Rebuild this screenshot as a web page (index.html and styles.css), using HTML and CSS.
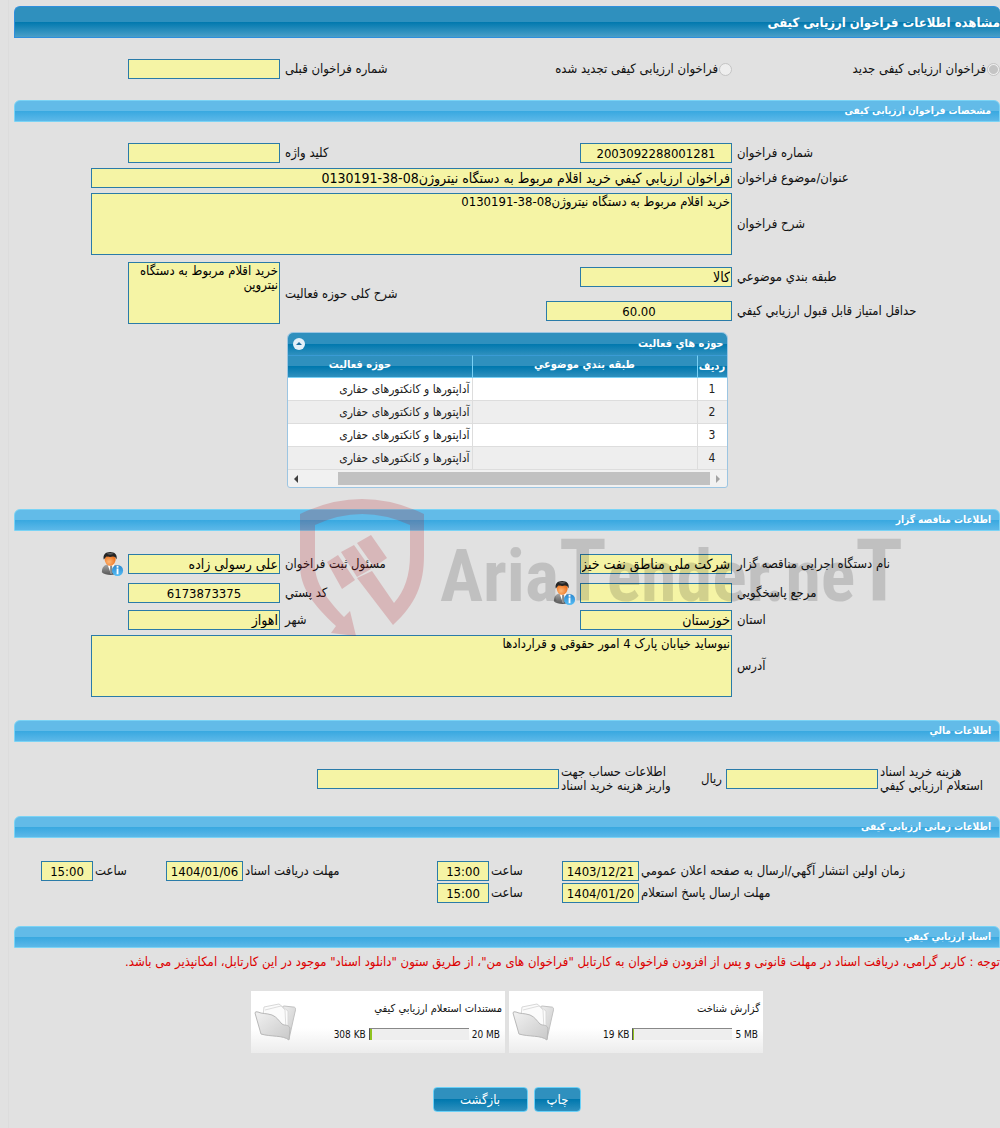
FILE: index.html
```html
<!DOCTYPE html>
<html lang="fa" dir="rtl">
<head>
    <meta charset="UTF-8">
    <meta name="viewport" content="width=device-width, initial-scale=1.0">
    <title>مشاهده اطلاعات فراخوان ارزیابی کیفی</title>
    <link rel="stylesheet" href="styles.css">
</head>
<body>

<!-- Shared icons -->
<svg class="sprite" aria-hidden="true">
    <defs>
        <linearGradient id="suit" x1="0" y1="0" x2="0" y2="1"><stop offset="0" stop-color="#aaa"/><stop offset="1" stop-color="#555"/></linearGradient>
        <radialGradient id="face" cx=".4" cy=".6" r=".6"><stop offset="0" stop-color="#ffb978"/><stop offset="1" stop-color="#ee7420"/></radialGradient>
        <linearGradient id="blue" x1="0" y1="0" x2="0" y2="1"><stop offset="0" stop-color="#2a86cf"/><stop offset="1" stop-color="#55bdf5"/></linearGradient>
        <linearGradient id="paper" x1="0" y1="0" x2="1" y2="1"><stop offset="0" stop-color="#f2f2f2"/><stop offset="1" stop-color="#c8c8c8"/></linearGradient>
    </defs>
    <symbol id="person" viewBox="0 0 24 26">
        <path d="M1 22c0-6 3-8 7-9h5c4 1 7 3 7 9-4 4-15 4-19 0z" fill="url(#suit)"/>
        <path d="M7 13l4 11 4-11z" fill="#fff"/>
        <path d="M10 15h2l1 7-2 2-1-2z" fill="#888"/>
        <path d="M4 7c0 5 3 8 6 8s6-3 6-8l-2-3H6z" fill="url(#face)"/>
        <path d="M3 8c-1-5 2-8 7-8s8 3 7 8c-1-2-2-3-4-3-3 1-6 0-7 0-1 1-2 2-3 3z" fill="#252525"/>
        <path d="M6 2c2-1 6-1 8 0-2 1-6 1-8 0z" fill="#777"/>
        <circle cx="18" cy="20" r="6" fill="url(#blue)"/>
        <path d="M17 15h2v2h-2zm0 3h2v6h-2z" fill="#fff"/>
    </symbol>
    <symbol id="folder" viewBox="0 0 42 38">
        <path d="M26 5l4-2 9 1c3 0 3 2 2 5l-6 27-10-12z" fill="url(#paper)" stroke="#c2c2c2"/>
        <path d="M9 13l1-9 15-3 9 7 0 18-6 2z" fill="#fbfbfb" stroke="#d8d8d8"/>
        <path d="M11 7l16-4 4 4 1 20" fill="none" stroke="#ddd"/>
        <path d="M1 10q0-2 3-1c4 2 8 1 14 3 5 2 7 6 10 9 3 2 6 0 8 4l-1 12c-6-5-18-3-28-6z" fill="url(#paper)" stroke="#b8b8b8"/>
    </symbol>
</svg>

<main class="page">
    <h1 class="title-bar">مشاهده اطلاعات فراخوان ارزیابی کیفی</h1>

    <div class="form-grid kind-row">
        <label class="radio"><input type="radio" name="kind" checked disabled>فراخوان ارزیابی کیفی جدید</label>
        <label class="radio"><input type="radio" name="kind" disabled>فراخوان ارزیابی کیفی تجدید شده</label>
        <label for="prevNo">شماره فراخوان قبلی</label>
        <input class="box" id="prevNo" type="text" readonly>
    </div>

    <h2 class="bar">مشخصات فراخوان ارزیابی کیفی</h2>
    <div class="form-grid spec">
        <label for="callNo">شماره فراخوان</label>
        <input class="box number" id="callNo" type="text" value="2003092288001281" readonly>
        <label for="keyword">کلید واژه</label>
        <input class="box" id="keyword" type="text" readonly>

        <label for="subject">عنوان/موضوع فراخوان</label>
        <input class="box wide" id="subject" type="text" value="فراخوان ارزیابي کیفي خرید اقلام مربوط به دستگاه نیتروژن08-38-0130191" readonly>

        <label for="desc">شرح فراخوان</label>
        <textarea class="box wide" id="desc" readonly>خرید اقلام مربوط به دستگاه نیتروژن08-38-0130191</textarea>
    </div>
    <div class="form-grid scope">
        <label for="category">طبقه بندي موضوعي</label>
        <input class="box" id="category" type="text" value="کالا" readonly>
        <label class="tall" for="scopeText">شرح کلی حوزه فعالیت</label>
        <textarea class="box tall" id="scopeText" readonly>خرید اقلام مربوط به دستگاه نیتروپن</textarea>
        <label for="minScore">حداقل امتیاز قابل قبول ارزیابي کیفي</label>
        <input class="box number score" id="minScore" type="text" value="60.00" readonly>
    </div>

    <section class="grid-panel">
        <div class="grid-title">
            <span>حوزه هاي فعالیت</span>
            <button class="collapse" type="button" aria-label="بستن">
                <svg viewBox="0 0 12 12"><circle cx="6" cy="6" r="6" fill="#e4f0f8"/><path d="M3 7h6L6 4z" fill="#1c6d9e"/></svg>
            </button>
        </div>
        <div class="grid-view">
            <table>
                <thead>
                    <tr><th class="col-no">ردیف</th><th class="col-cat">طبقه بندي موضوعي</th><th class="col-scope">حوزه فعالیت</th></tr>
                </thead>
                <tbody>
                    <tr><td>1</td><td></td><td>آداپتورها و کانکتورهای حفاری</td></tr>
                    <tr><td>2</td><td></td><td>آداپتورها و کانکتورهای حفاری</td></tr>
                    <tr><td>3</td><td></td><td>آداپتورها و کانکتورهای حفاری</td></tr>
                    <tr><td>4</td><td></td><td>آداپتورها و کانکتورهای حفاری</td></tr>
                </tbody>
            </table>
        </div>
        <div class="scrollbar">
            <span class="arrow arrow-right"></span>
            <span class="thumb"></span>
            <span class="arrow arrow-left"></span>
        </div>
    </section>

    <div class="tenderer">
        <h2 class="bar">اطلاعات مناقصه گزار</h2>
        <div class="form-grid org">
            <label for="orgName">نام دستگاه اجرایی مناقصه گزار</label>
            <input class="box" id="orgName" type="text" value="شرکت ملی مناطق نفت خیز جنوب" readonly>
            <label for="owner">مسئول ثبت فراخوان</label>
            <div class="with-icon">
                <input class="box" id="owner" type="text" value="علی رسولی زاده" readonly>
                <svg class="person"><use href="#person"/></svg>
            </div>

            <label for="contact">مرجع پاسخگویي</label>
            <div class="with-icon">
                <input class="box" id="contact" type="text" readonly>
                <svg class="person"><use href="#person"/></svg>
            </div>
            <label for="postal">کد پستي</label>
            <input class="box number" id="postal" type="text" value="6173873375" readonly>

            <label for="province">استان</label>
            <input class="box" id="province" type="text" value="خوزستان" readonly>
            <label for="city">شهر</label>
            <input class="box" id="city" type="text" value="اهواز" readonly>

            <label for="address">آدرس</label>
            <textarea class="box wide" id="address" readonly>نیوساید خیابان پارک 4 امور حقوقی و قراردادها</textarea>
        </div>

        <div class="watermark" dir="ltr">
            <svg viewBox="0 0 126 138">
                <path d="M0 15Q62-15 124 15V56C124 85 116 105 93 126L57 79 72 72 94 104Q110 86 110 56V26Q62 4 15 26V66C15 85 27 100 44 118L50 112 56 137 31 134 36 127C12 105 0 88 0 66z"/>
                <path d="M57 44L71 36 87 59 74 68zM41 53L54 46 71 70 57 78zM27 63L38 56 55 81 42 90z"/>
            </svg>
            <span class="brand">Aria<span class="cap">T</span>ender.ne<span class="cap">T</span></span>
        </div>
    </div>

    <h2 class="bar">اطلاعات مالي</h2>
    <div class="finance">
        <label for="cost">هزینه خرید اسناد<br>استعلام ارزیابي کیفي</label>
        <input class="box" id="cost" type="text" readonly>
        <span class="unit">ریال</span>
        <label for="account">اطلاعات حساب جهت<br>واریز هزینه خرید اسناد</label>
        <input class="box account" id="account" type="text" readonly>
    </div>

    <h2 class="bar">اطلاعات زمانی ارزیابی کیفی</h2>
    <div class="times">
        <label for="pubDate">زمان اولین انتشار آگهي/ارسال به صفحه اعلان عمومي</label>
        <input class="box number" id="pubDate" type="text" value="1403/12/21" readonly>
        <label for="pubTime">ساعت</label>
        <input class="box number" id="pubTime" type="text" value="13:00" readonly>
        <label for="docDate">مهلت دریافت اسناد</label>
        <input class="box number" id="docDate" type="text" value="1404/01/06" readonly>
        <label for="docTime">ساعت</label>
        <input class="box number" id="docTime" type="text" value="15:00" readonly>

        <label class="new-row" for="replyDate">مهلت ارسال پاسخ استعلام</label>
        <input class="box number" id="replyDate" type="text" value="1404/01/20" readonly>
        <label for="replyTime">ساعت</label>
        <input class="box number" id="replyTime" type="text" value="15:00" readonly>
    </div>

    <h2 class="bar">اسناد ارزیابي کیفي</h2>
    <p class="notice">توجه : کاربر گرامی، دریافت اسناد در مهلت قانونی و پس از افزودن فراخوان به کارتابل "فراخوان های من"، از طریق ستون "دانلود اسناد" موجود در این کارتابل، امکانپذیر می باشد.</p>

    <div class="files">
        <article class="file">
            <div class="file-info">
                <h3>گزارش شناخت</h3>
                <div class="usage"><span dir="ltr">5 MB</span><span class="meter"><span class="used" style="width: 1%"></span></span><span dir="ltr">19 KB</span></div>
            </div>
            <svg class="folder"><use href="#folder"/></svg>
        </article>
        <article class="file">
            <div class="file-info">
                <h3>مستندات استعلام ارزیابي کیفي</h3>
                <div class="usage"><span dir="ltr">20 MB</span><span class="meter"><span class="used" style="width: 2%"></span></span><span dir="ltr">308 KB</span></div>
            </div>
            <svg class="folder"><use href="#folder"/></svg>
        </article>
    </div>

    <div class="actions">
        <button class="btn" type="button">چاپ</button>
        <button class="btn back" type="button">بازگشت</button>
    </div>
</main>

</body>
</html>
```
FILE: styles.css
```css
* { box-sizing: border-box; }
body { margin: 0; background: #e1e1e1; color: #111; font: 13px/14px Tahoma, "DejaVu Sans Condensed", "DejaVu Sans", sans-serif; overflow-x: hidden; }
h1, h2, h3, p { margin: 0; }
input, textarea, button { font-family: inherit; }
.sprite { position: absolute; width: 0; height: 0; }
.page { margin-left: 8px; padding: 6px 0 16px 5px; border-left: 1px solid #dcdcdc; }

/* Title and section bars */
.title-bar { height: 32px; border: 1px solid #2e8fdd; border-right: 0; border-radius: 6px 6px 0 0; background: linear-gradient(#2f90be 50%, #0078ae 50%, #4a9fc8); color: #fff; font-size: 13px; line-height: 32px; white-space: nowrap; }
.bar { height: 22px; padding: 0 8px; border: 1px solid #7ad3f5; border-radius: 6px 6px 0 0; background: linear-gradient(#62bbe8 50%, #38a8e0 50%, #5cb8e8); color: #fff; font-size: 10px; line-height: 20px; }

/* Form */
.form-grid { display: grid; grid-template-columns: 263fr 287fr 155fr 266fr; gap: 5px; align-items: center; }
.form-grid label { text-align: left; white-space: nowrap; }
.box { width: 152px; height: 20px; padding: 0 1px; border: 1px solid #2a7ba8; border-radius: 0; background: #f5f4a5; color: #000; font-size: 14px; outline: none; }
textarea.box { display: block; height: 62px; padding: 1px; font-size: 13px; line-height: 14px; resize: none; overflow: hidden; }
.box.wide { grid-column: span 3; width: 641px; max-width: 100%; }
.box.number { font-size: 13px; text-align: center; }
.box.score { width: 186px; }
.form-grid .tall { grid-row: span 2; }

.kind-row { padding: 21px 0; }
.form-grid .radio { display: flex; align-items: center; gap: 1px; }
.radio input { appearance: none; flex: none; width: 13px; height: 13px; margin: 0; border: 1px solid #c4c4c4; border-radius: 50%; background: #eee; }
.radio input:checked { background: radial-gradient(#c4c4c4 4px, #eee 5px); }

.spec { padding: 21px 0 7px; }
.scope { grid-template-rows: 30px 30px; gap: 4px 5px; padding-bottom: 6px; }
textarea.tall { align-self: start; }

/* Activity grid */
.grid-panel { width: 441px; margin: 0 auto 21px; border: 1px solid #9cc5e2; border-radius: 6px 6px 3px 3px; background: #f1f1f1; overflow: hidden; }
.grid-title { display: flex; justify-content: space-between; align-items: center; height: 22px; padding: 0 3px 0 5px; background: linear-gradient(#2f90be 50%, #0078ae 50%, #2f90be); color: #fff; font-size: 11px; font-weight: bold; }
.collapse { width: 12px; height: 12px; padding: 0; border: 0; background: none; }
.collapse svg { display: block; width: 12px; height: 12px; }
.grid-view { overflow: hidden; }
table { width: 479px; table-layout: fixed; border-collapse: separate; border-spacing: 0; }
.col-no { width: 30px; }
.col-cat { width: 225px; }
th { height: 23px; padding: 0; border-top: 1px solid #3a9bd5; border-bottom: 1px solid #78d0f5; border-left: 1px solid #78d0f5; background: linear-gradient(#2f90be 50%, #0078ae 50%, #2f90be); color: #fff; font-size: 11px; }
.col-cat, .col-scope { padding-bottom: 4px; }
td { height: 23px; padding: 0 2px; border-bottom: 1px solid #ddd; border-left: 1px solid #ddd; background: #fff; color: #222; font-size: 12px; }
tr:nth-child(even) td { background: #eee; }
td:first-child { text-align: center; }
.scrollbar { display: flex; align-items: center; height: 17px; }
.thumb { width: 372px; height: 13px; background: #c1c1c1; }
.arrow { width: 17px; }
.arrow::after { content: ""; display: block; width: 0; margin: auto; border: 4px solid transparent; }
.arrow-right::after { border-right: 0; border-left: 4px solid #a3a3a3; }
.arrow-left { margin-right: auto; }
.arrow-left::after { border-left: 0; border-right: 4px solid #404040; }

/* Tenderer */
.tenderer { position: relative; }
.org { padding: 21px 0 23px; }
.with-icon { display: flex; align-items: center; gap: 4px; }
.person { width: 24px; height: 24px; }
.watermark { position: absolute; top: -10px; left: 286px; display: flex; align-items: center; gap: 14px; pointer-events: none; }
.watermark svg { width: 126px; height: 138px; fill: #b4141e; opacity: .2; }
.brand { padding-top: 12px; color: #000; font: bold 72px/80px "Roboto Condensed", Roboto, sans-serif; opacity: .14; }
.cap { font-size: 88px; }

/* Finance */
.finance { display: flex; align-items: center; gap: 2px; padding: 23px 10px 23px 0; }
.finance label { width: 110px; text-align: left; white-space: nowrap; }
.finance .unit { margin: 0 2px 0 28px; }
.finance .account { width: 242px; }

/* Dates */
.times { display: grid; grid-template-columns: 359fr 77px 69fr 52px 190fr 77px 69fr 52px 25fr; gap: 2px; align-items: center; padding: 23px 0; }
.times label { text-align: left; white-space: nowrap; }
.times .box { width: 100%; }
.times .new-row { grid-column: 1; }

/* Documents */
.notice { padding-top: 7px; color: #d00; white-space: nowrap; }
.files { display: flex; justify-content: center; gap: 4px; padding-top: 22px; }
.file { display: flex; justify-content: space-between; align-items: center; width: 254px; height: 62px; padding: 0 3px; background: linear-gradient(#fff 60%, #ececec); }
.file h3 { font-size: 11px; font-weight: normal; }
.file-info { display: grid; gap: 12px; }
.usage { display: flex; gap: 3px; padding-right: 2px; font-size: 10px; }
.meter { display: flex; justify-content: flex-end; width: 100px; height: 12px; border-top: 1px solid #888; border-left: 1px solid #555; background: #eee; }
.used { background: #8fc31f; }
.folder { width: 42px; height: 38px; }

.actions { display: flex; justify-content: center; gap: 6px; padding-top: 34px; }
.btn { height: 25px; padding: 0 12px; border: 1px solid #6ad0f7; border-radius: 4px; background: linear-gradient(#2f90be 50%, #0078ae 50%, #2f90be); color: #fff; font-size: 13px; }
.btn.back { min-width: 95px; }
```
